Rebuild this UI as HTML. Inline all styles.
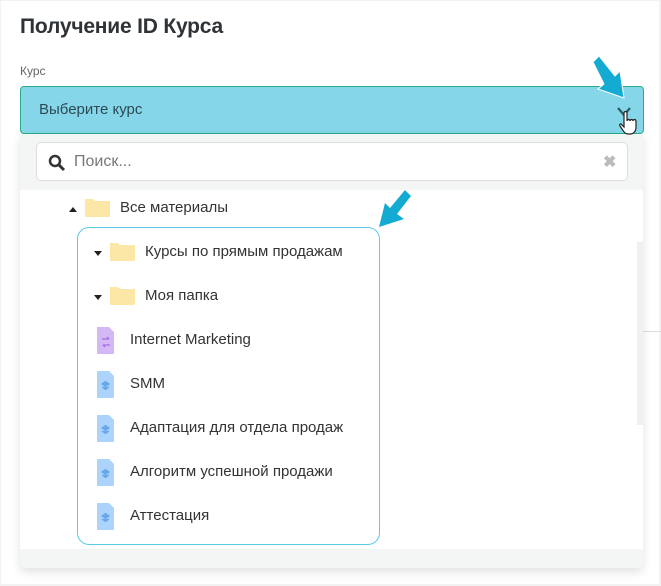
<!DOCTYPE html>
<html><head><meta charset="utf-8"><style>
*{margin:0;padding:0;box-sizing:border-box}
html,body{width:661px;height:586px;overflow:hidden}
body{background:#f2f2f2;font-family:"Liberation Sans",sans-serif;position:relative}
.page{position:absolute;left:1px;top:1px;width:658px;height:583px;background:#fff}
h1{position:absolute;left:19px;top:14px;font-size:21px;font-weight:bold;color:#2e3338;letter-spacing:-0.2px}
.lbl{position:absolute;left:19px;top:63px;font-size:12px;color:#666}
.sel{position:absolute;left:19px;top:85px;width:624px;height:48px;background:#86d6ea;border:1px solid #2aad87;border-radius:4px}
.sel span{position:absolute;left:18px;top:14px;font-size:15px;color:#2c4a55}
.dd{position:absolute;left:19px;top:133px;width:623px;height:434px;background:#f4f5f5;border-radius:0 0 6px 6px;box-shadow:0 4px 10px rgba(0,0,0,.12)}
.search{position:absolute;left:16px;top:8px;width:592px;height:39px;background:#fff;border:1px solid #ddd;border-radius:5px}
.search span{position:absolute;left:37px;top:10px;font-size:16px;color:#777}
.search .x{position:absolute;left:566px;top:9px;font-size:16px;color:#bbb;font-weight:bold}
.list{position:absolute;left:0;top:56px;width:623px;height:359px;background:#fff}
.sb{position:absolute;left:617px;top:52px;width:6px;height:183px;background:#f0f0f0}
.it{position:absolute;font-size:15px;color:#333;white-space:nowrap}
.box{position:absolute;left:57px;top:37px;width:303px;height:318px;border:1.5px solid #5bcbe3;border-radius:12px}
.line{position:absolute;left:642px;top:330px;width:19px;height:1px;background:#ddd}
</style></head><body>
<div class="page">
<h1>Получение ID Курса</h1>
<div class="lbl">Курс</div>
<div class="line"></div>
<div class="sel"><span>Выберите курс</span>
<svg style="position:absolute;left:596px;top:20px" width="14" height="10"><path d="M1 1 L7 8 L13 1" stroke="#2b5c63" stroke-width="2.2" fill="none"/></svg>
</div>
<div class="dd">
<div class="search">
<svg style="position:absolute;left:11px;top:11px" width="18" height="18"><circle cx="7" cy="7" r="5" stroke="#333" stroke-width="2.5" fill="none"/><path d="M11 11 L16 16" stroke="#333" stroke-width="3"/></svg>
<span>Поиск...</span><span class="x">✖</span></div>
<div class="list">
<div class="sb"></div>
<div class="box"></div>
<svg style="position:absolute;left:48px;top:6px" width="44" height="22"><path d="M1 16 L5 11 L9 16Z" fill="#222"/><path d="M17 3 h8 l2 2 h14 a1 1 0 0 1 1 1 v14 a1 1 0 0 1 -1 1 h-23 a1 1 0 0 1 -1 -1z" fill="#fde7a6"/></svg>
<div class="it" style="left:100px;top:9px">Все материалы</div>
<svg style="position:absolute;left:73px;top:50px" width="44" height="22"><path d="M1 11 L5 16 L9 11Z" fill="#222"/><path d="M17 3 h8 l2 2 h14 a1 1 0 0 1 1 1 v14 a1 1 0 0 1 -1 1 h-23 a1 1 0 0 1 -1 -1z" fill="#fde7a6"/></svg>
<div class="it" style="left:125px;top:53px">Курсы по прямым продажам</div>
<svg style="position:absolute;left:73px;top:94px" width="44" height="22"><path d="M1 11 L5 16 L9 11Z" fill="#222"/><path d="M17 3 h8 l2 2 h14 a1 1 0 0 1 1 1 v14 a1 1 0 0 1 -1 1 h-23 a1 1 0 0 1 -1 -1z" fill="#fde7a6"/></svg>
<div class="it" style="left:125px;top:97px">Моя папка</div>
<svg style="position:absolute;left:76px;top:136px" width="20" height="30"><path d="M1 1 h12 l5 5 v21 a1 1 0 0 1 -1 1 h-15 a1 1 0 0 1 -1 -1z" fill="#d3b8f5"/><path d="M6 13 h7 M13 13 l-2 -2 M7 19 h7 M7 19 l2 2" stroke="#a56ee8" stroke-width="1.3" fill="none"/></svg>
<div class="it" style="left:110px;top:141px">Internet Marketing</div>
<svg style="position:absolute;left:76px;top:180px" width="20" height="30"><path d="M1 1 h12 l5 5 v21 a1 1 0 0 1 -1 1 h-15 a1 1 0 0 1 -1 -1z" fill="#abd3fb"/><path d="M6 14 l3.5 -2.5 l3.5 2.5 l-3.5 2.5z M6 17 l3.5 2.5 l3.5 -2.5" stroke="#6aa8ea" stroke-width="1.3" fill="#6aa8ea"/></svg>
<div class="it" style="left:110px;top:185px">SMM</div>
<svg style="position:absolute;left:76px;top:224px" width="20" height="30"><path d="M1 1 h12 l5 5 v21 a1 1 0 0 1 -1 1 h-15 a1 1 0 0 1 -1 -1z" fill="#abd3fb"/><path d="M6 14 l3.5 -2.5 l3.5 2.5 l-3.5 2.5z M6 17 l3.5 2.5 l3.5 -2.5" stroke="#6aa8ea" stroke-width="1.3" fill="#6aa8ea"/></svg>
<div class="it" style="left:110px;top:229px">Адаптация для отдела продаж</div>
<svg style="position:absolute;left:76px;top:268px" width="20" height="30"><path d="M1 1 h12 l5 5 v21 a1 1 0 0 1 -1 1 h-15 a1 1 0 0 1 -1 -1z" fill="#abd3fb"/><path d="M6 14 l3.5 -2.5 l3.5 2.5 l-3.5 2.5z M6 17 l3.5 2.5 l3.5 -2.5" stroke="#6aa8ea" stroke-width="1.3" fill="#6aa8ea"/></svg>
<div class="it" style="left:110px;top:273px">Алгоритм успешной продажи</div>
<svg style="position:absolute;left:76px;top:312px" width="20" height="30"><path d="M1 1 h12 l5 5 v21 a1 1 0 0 1 -1 1 h-15 a1 1 0 0 1 -1 -1z" fill="#abd3fb"/><path d="M6 14 l3.5 -2.5 l3.5 2.5 l-3.5 2.5z M6 17 l3.5 2.5 l3.5 -2.5" stroke="#6aa8ea" stroke-width="1.3" fill="#6aa8ea"/></svg>
<div class="it" style="left:110px;top:317px">Аттестация</div>
</div>
</div>
<svg style="position:absolute;left:590px;top:55px" width="40" height="45"><path d="M2 6 L8 0 L24 20 L29 15 L33 42 L7 33 L13 28 Z" fill="#14abd3" stroke="#fff" stroke-width="1"/></svg>
<svg style="position:absolute;left:376px;top:189px" width="36" height="40"><path d="M34 6 L28 0 L13 18 L8 13 L2 37 L27 29 L20 24 Z" fill="#14abd3"/></svg>
<svg style="position:absolute;left:618px;top:110px" width="20" height="26"><path d="M5 2 a1.5 1.5 0 0 1 3 0 v8 a1.5 1.5 0 0 1 3 0 a1.5 1.5 0 0 1 3 0 a1.5 1.5 0 0 1 3 0 v6 c0 4 -2 7 -6 7 h-2 c-3 0 -4 -2 -6 -5 l-2 -3 c-1 -2 1 -3 2 -1 l2 2z" fill="#fff" stroke="#222" stroke-width="1.2"/></svg>
</div>
</body></html>
